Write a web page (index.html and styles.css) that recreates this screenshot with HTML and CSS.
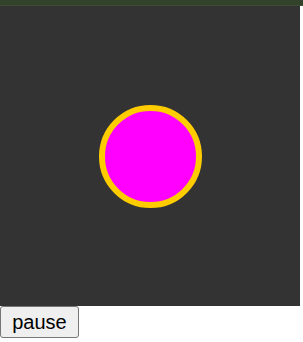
FILE: index.html
```html
<!DOCTYPE html>
<html>
<head>
  <title>Bouncing Ball</title>
  <link rel="stylesheet" href="styles.css">
</head>
<body>

<div class="topbar"></div>

<div class="stage">
  <div class="ball"></div>
</div>

<button type="button" id="pauseBtn">pause</button>

</body>
</html>
```

FILE: styles.css
```css
* {
  box-sizing: border-box;
}

body {
  margin: 0;
  padding: 0;
  background: white;
  font-family: "Liberation Sans", Arial, sans-serif;
}

.topbar {
  height: 6px;
  background: #33432b;
  border-bottom: 1px solid #3d4a36;
}

.stage {
  width: 300px;
  height: 300px;
  background: #333333;
  display: flex;
  justify-content: center;
  align-items: center;
}

.ball {
  width: 103px;
  height: 103px;
  border-radius: 50%;
  background: #ff00ff;
  border: 6px solid #ffcc00;
}

button {
  display: block;
  width: 79px;
  height: 32px;
  font-family: "Liberation Sans", Arial, sans-serif;
  font-size: 20px;
  padding: 0 6px;
  background: #efefef;
  border: 1px solid #767676;
  border-radius: 3px;
  color: black;
}
```
